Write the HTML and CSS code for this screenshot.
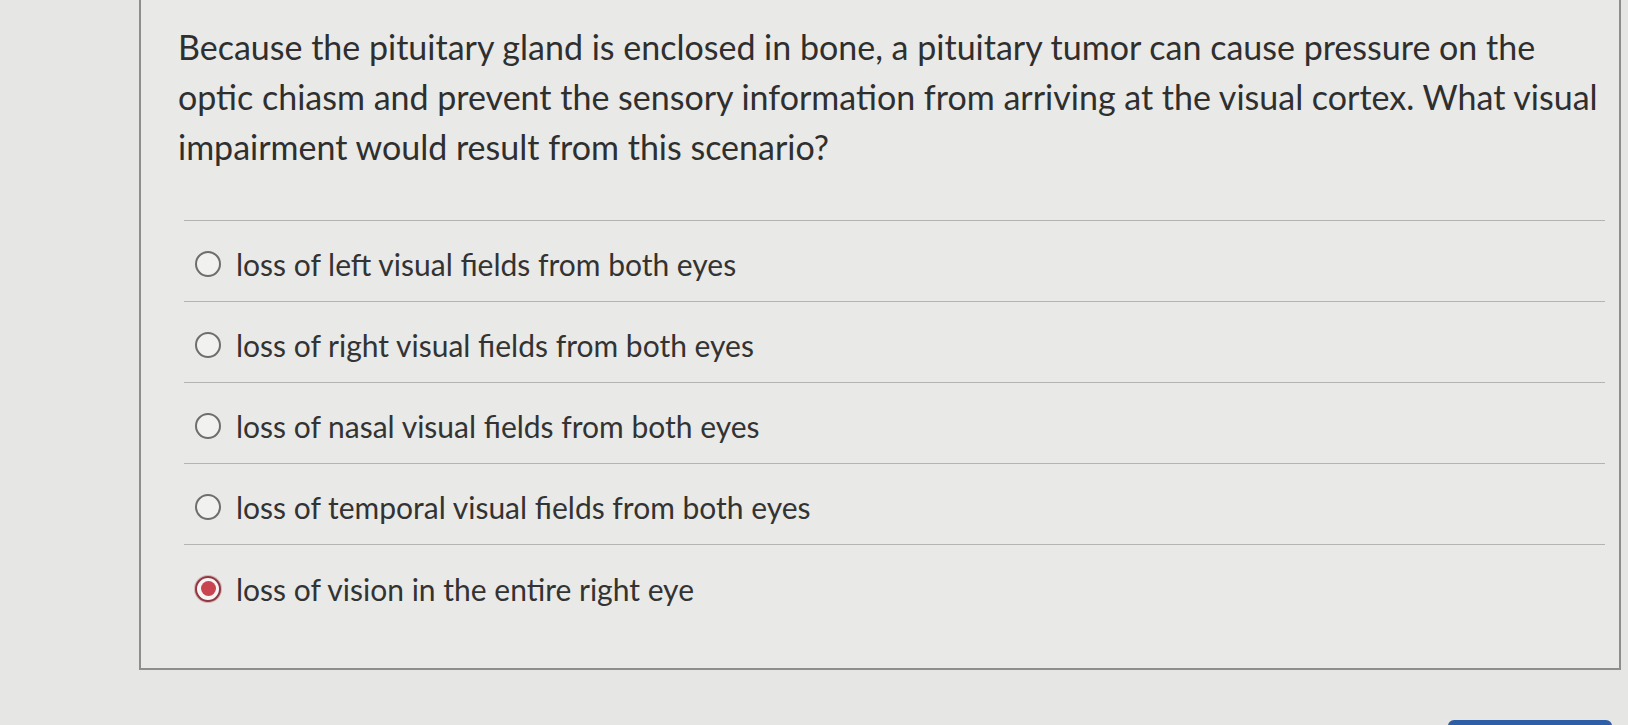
FILE: index.html
```html
<!DOCTYPE html>
<html lang="en">
<head>
<meta charset="utf-8">
<title>Question</title>
<link rel="stylesheet" href="styles.css">
</head>
<body>
<div class="page">
  <div class="card">
    <p class="question">Because the pituitary gland is enclosed in bone, a pituitary tumor can cause pressure on the optic chiasm and prevent the sensory information from arriving at the visual cortex. What visual impairment would result from this scenario?</p>
    <ul class="options">
      <li class="option"><span class="radio"></span><span class="label">loss of left visual fields from both eyes</span></li>
      <li class="option"><span class="radio"></span><span class="label">loss of right visual fields from both eyes</span></li>
      <li class="option"><span class="radio"></span><span class="label">loss of nasal visual fields from both eyes</span></li>
      <li class="option"><span class="radio"></span><span class="label">loss of temporal visual fields from both eyes</span></li>
      <li class="option last"><span class="radio checked"></span><span class="label">loss of vision in the entire right eye</span></li>
    </ul>
  </div>
  <div class="actions"><span class="button"></span></div>
</div>
</body>
</html>
```
FILE: styles.css
```css
html, body {
  margin: 0;
  padding: 0;
}
body {
  background: #e6e6e4;
  font-family: Lato, "Open Sans", sans-serif;
  color: #333;
  overflow: hidden;
}
.page {
  width: 1628px;
  height: 725px;
  display: flex;
  flex-direction: column;
}
.card {
  flex: none;
  margin-left: 139px;
  width: 1482px;
  height: 670px;
  box-sizing: border-box;
  border: 2px solid #8e8e8e;
  border-top: none;
  background: #e9e9e7;
  padding: 22px 0 0 37px;
}
.question {
  margin: 0;
  width: 1432px;
  font-size: 34px;
  line-height: 50px;
  color: #2f2f2f;
}
.options {
  list-style: none;
  margin: 48px 14px 0 6px;
  padding: 0;
  border-top: 1.5px solid #b4b4b2;
}
.option {
  display: flex;
  align-items: center;
  height: 81px;
  box-sizing: border-box;
  padding: 6px 0 0 11px;
  border-bottom: 1.5px solid #b4b4b2;
  font-size: 30px;
  color: #333;
}
.option.last {
  border-bottom: none;
}
.radio {
  width: 26px;
  height: 26px;
  box-sizing: border-box;
  border: 2px solid #6e6e6e;
  border-radius: 50%;
  background: #f1f1ef;
  margin-right: 15px;
  flex: none;
  display: flex;
  align-items: center;
  justify-content: center;
}
.radio.checked {
  border: 2px solid #8f3840;
  background: #f6f4f4;
  box-shadow: 0 0 0 1px #d6b3b6;
}
.radio.checked::after {
  content: "";
  width: 15px;
  height: 15px;
  border-radius: 50%;
  background: #c9444f;
}
.label {
  white-space: nowrap;
}
.actions {
  flex: none;
  display: flex;
  justify-content: flex-end;
  margin-top: 50px;
  padding-right: 16px;
}
.button {
  width: 164px;
  height: 30px;
  border-radius: 6px 6px 0 0;
  background: #2e5fa6;
}
```
